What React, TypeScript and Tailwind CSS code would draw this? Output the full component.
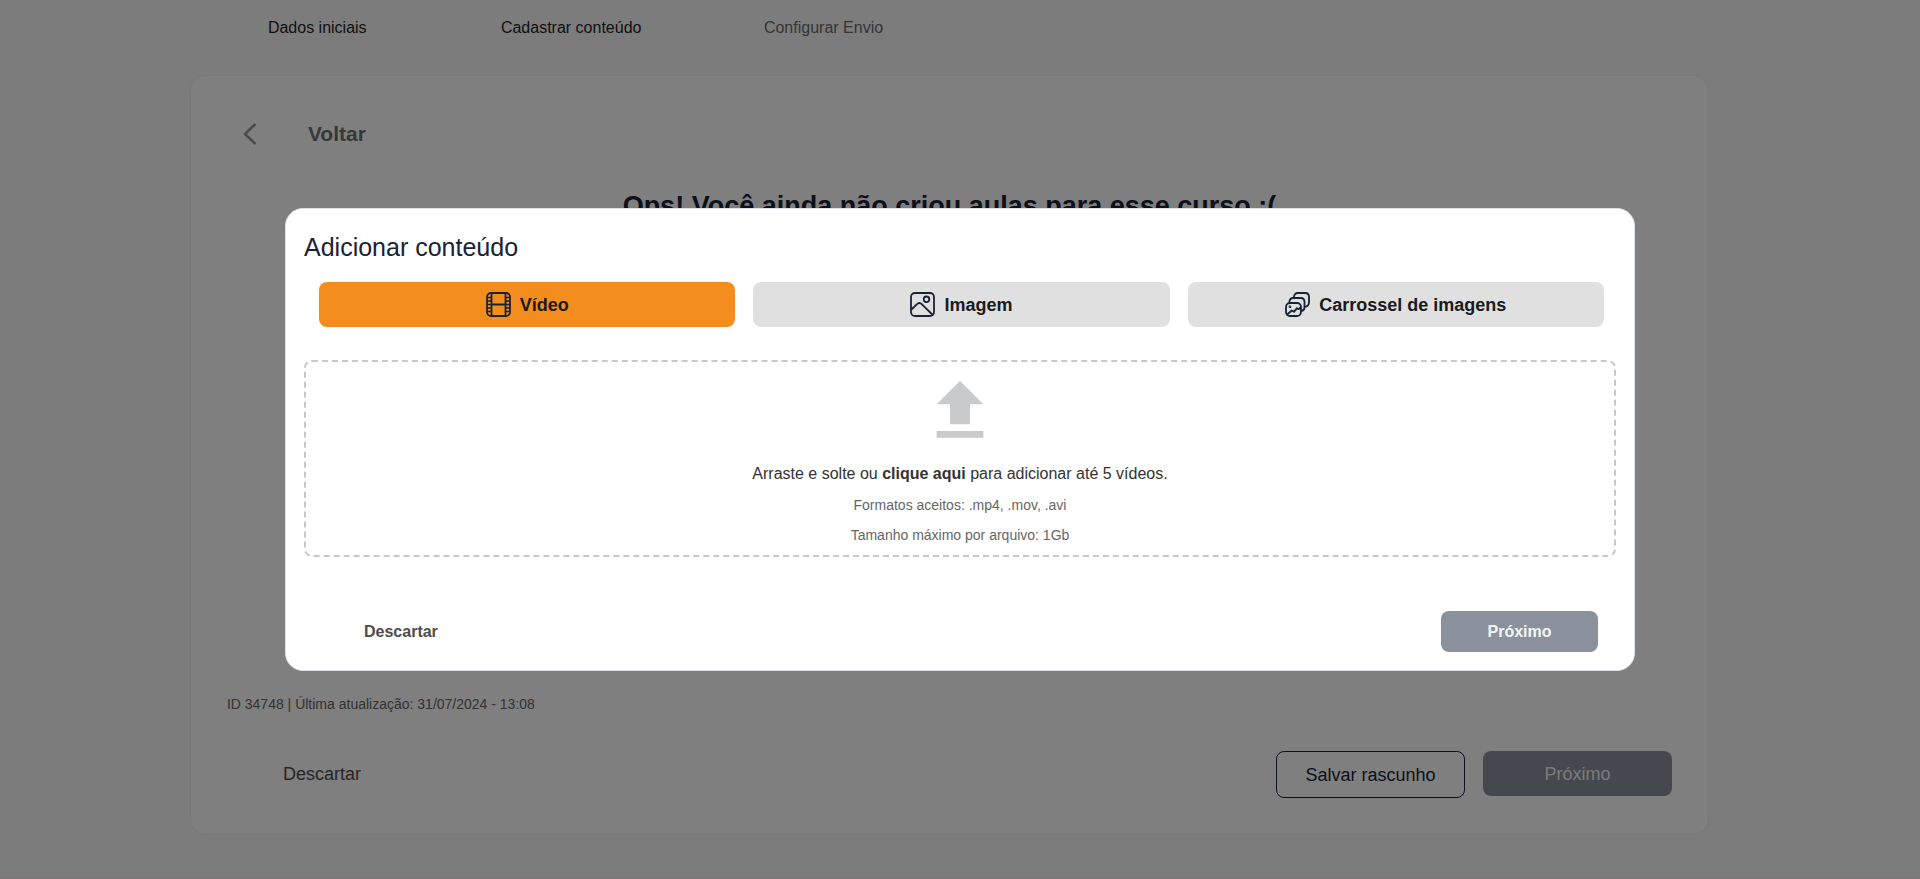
import { useState } from "react"

type ContentType = "video" | "image" | "carousel"

const VideoIcon = () => (
    <svg className="w-[25px] h-[25px]" viewBox="0 0 25 25" fill="none" stroke="#1a2236" strokeWidth="1.8" aria-hidden="true">
        <rect x="1" y="1" width="23" height="23" rx="4" />
        <path d="M5.5 1v23M19.5 1v23M5.5 12.5h14" />
        <path d="M1 5.5h4.5M1 9h4.5M1 12.5h4.5M1 16h4.5M1 19.5h4.5M19.5 5.5H24M19.5 9H24M19.5 12.5H24M19.5 16H24M19.5 19.5H24" strokeWidth="1.3" />
    </svg>
)

const ImageIcon = () => (
    <svg className="w-[25px] h-[25px]" viewBox="0 0 25 25" fill="none" stroke="#1a2236" strokeWidth="1.8" strokeLinejoin="round" aria-hidden="true">
        <rect x="1" y="1" width="23" height="23" rx="4" />
        <circle cx="16.5" cy="7.3" r="2.8" />
        <path d="M1.5 17.5l5.2-5.2c1.6-1.6 3.7-1.6 5.3 0L22.8 23" />
    </svg>
)

const CarouselIcon = () => (
    <svg className="w-[25px] h-[25px]" viewBox="0 0 25 25" fill="none" stroke="#1a2236" strokeWidth="1.8" strokeLinejoin="round" strokeLinecap="round" aria-hidden="true">
        <rect x="1" y="11" width="15" height="13" rx="4" />
        <path d="M4.5 11V9.8C4.5 7.6 6.1 6 8.3 6h7.4c2.2 0 3.8 1.6 3.8 3.8v5.4c0 2-1.3 3.6-3.3 3.8" />
        <path d="M9 6V4.8C9 2.6 10.6 1 12.8 1h7.4C22.4 1 24 2.6 24 4.8v5.4c0 2.3-1.6 4.3-4.3 4.6" />
        <path d="M2.2 22.5l4.6-4 2.2 1.3 3-3.6 1.5 1 2-1.7" />
        <circle cx="5" cy="14.8" r="0.5" />
    </svg>
)

const tabs: { id: ContentType; label: string; icon: React.ReactNode }[] = [
    { id: "video", label: "Vídeo", icon: <VideoIcon /> },
    { id: "image", label: "Imagem", icon: <ImageIcon /> },
    { id: "carousel", label: "Carrossel de imagens", icon: <CarouselIcon /> },
]

const Steps = () => (
    <nav className="flex mx-auto w-4/5 px-[78px] pt-4 text-base leading-6">
        <a href="#dados" className="w-[233px] text-[#1f1f1f]">Dados iniciais</a>
        <a href="#conteudo" className="w-[263px] text-[#1f1f1f]">Cadastrar conteúdo</a>
        <a href="#envio" className="text-[#6b6b6b]">Configurar Envio</a>
    </nav>
)

const CourseCard = () => (
    <main className="flex flex-col mx-auto mt-[35px] w-4/5 min-h-[760px] rounded-2xl border border-[#f0f0f0] bg-white px-9">
        <button className="flex items-center self-start mt-11 ml-4 gap-[51px] text-[#6f6f6f]">
            <svg className="w-[14px] h-[22px]" viewBox="0 0 14 22" fill="none" stroke="#959595" strokeWidth="2.6" aria-hidden="true">
                <path d="M12.5 1L2 11l10.500 10" />
            </svg>
            <span className="text-[21px] leading-7 font-bold">Voltar</span>
        </button>
        <h1 className="mt-10 text-center text-[27px] leading-9 font-bold text-[#1a2236]">
            Ops! Você ainda não criou aulas para esse curso :(
        </h1>
        <div className="mt-auto pb-9">
            <p className="text-sm text-[#666666]">ID 34748 | Última atualização: 31/07/2024 - 13:08</p>
            <div className="flex items-start gap-[18px] mt-[37px] text-lg">
                <button className="mr-auto h-[45px] px-14 text-[#4d4d4d]">Descartar</button>
                <button className="w-[189px] h-[47px] rounded-lg border border-[#1a2236] text-[#1a2236]">Salvar rascunho</button>
                <button className="w-[189px] h-[45px] rounded-lg bg-[#8a919c] text-[#f5f5f5]">Próximo</button>
            </div>
        </div>
    </main>
)

const AddContentModal = () => {
    const [active, setActive] = useState<ContentType>("video")

    return (
        <div className="fixed inset-0 flex items-center justify-center bg-black/50">
            <section role="dialog" aria-modal="true" aria-labelledby="modal-title" className="w-full max-w-[1350px] rounded-[18px] border border-[#dce1ea] bg-white p-[18px]">
                <h2 id="modal-title" className="pt-0.5 text-[25px] leading-9 text-[#1a2236]">Adicionar conteúdo</h2>
                <div className="grid grid-cols-3 gap-[18px] mt-[17px] pl-[15px] pr-3">
                    {tabs.map(tab => (
                        <button
                            key={tab.id}
                            onClick={() => setActive(tab.id)}
                            className={`flex items-center justify-center gap-[9px] h-[45px] rounded-lg text-lg font-bold text-[#1a1a1a] ${active === tab.id ? "bg-[#f38d1e]" : "bg-[#e0e0e0]"}`}
                        >
                            {tab.icon}
                            {tab.label}
                        </button>
                    ))}
                </div>
                <label className="flex flex-col items-center mt-[33px] pt-[9px] pb-1.5 rounded-lg border-2 border-dashed border-[#c8c8c8] text-center cursor-pointer">
                    <input type="file" multiple className="sr-only" />
                    <svg className="w-20 h-20" viewBox="0 0 24 24" fill="#c8cacc" aria-hidden="true">
                        <path d="M5 20h14v-2H5v2zM5 10h4v6h6v-6h4l-7-7-7 7z" />
                    </svg>
                    <span className="mt-[9px] text-base leading-7 text-[#333333]">
                        Arraste e solte ou <strong>clique aqui</strong> para adicionar até 5 vídeos.
                    </span>
                    <span className="mt-[3px] text-sm leading-7 text-[#666666]">Formatos aceitos: .mp4, .mov, .avi</span>
                    <span className="mt-0.5 text-sm leading-7 text-[#666666]">Tamanho máximo por arquivo: 1Gb</span>
                </label>
                <div className="flex items-center justify-between mt-[54px] pl-[60px] pr-[18px] text-base font-bold">
                    <button className="h-[41px] text-[#4d4d4d]">Descartar</button>
                    <button className="w-[157px] h-[41px] rounded-lg bg-[#8a919c] text-[#f5f5f5]">Próximo</button>
                </div>
            </section>
        </div>
    )
}

export default function App() {
    return (
        <div className="min-h-screen border-b border-[#f5e9ea] bg-[#f9f9f9] pr-[21px] pb-[43px] font-['Liberation_Sans',Arial,sans-serif]">
            <Steps />
            <CourseCard />
            <AddContentModal />
        </div>
    )
}
